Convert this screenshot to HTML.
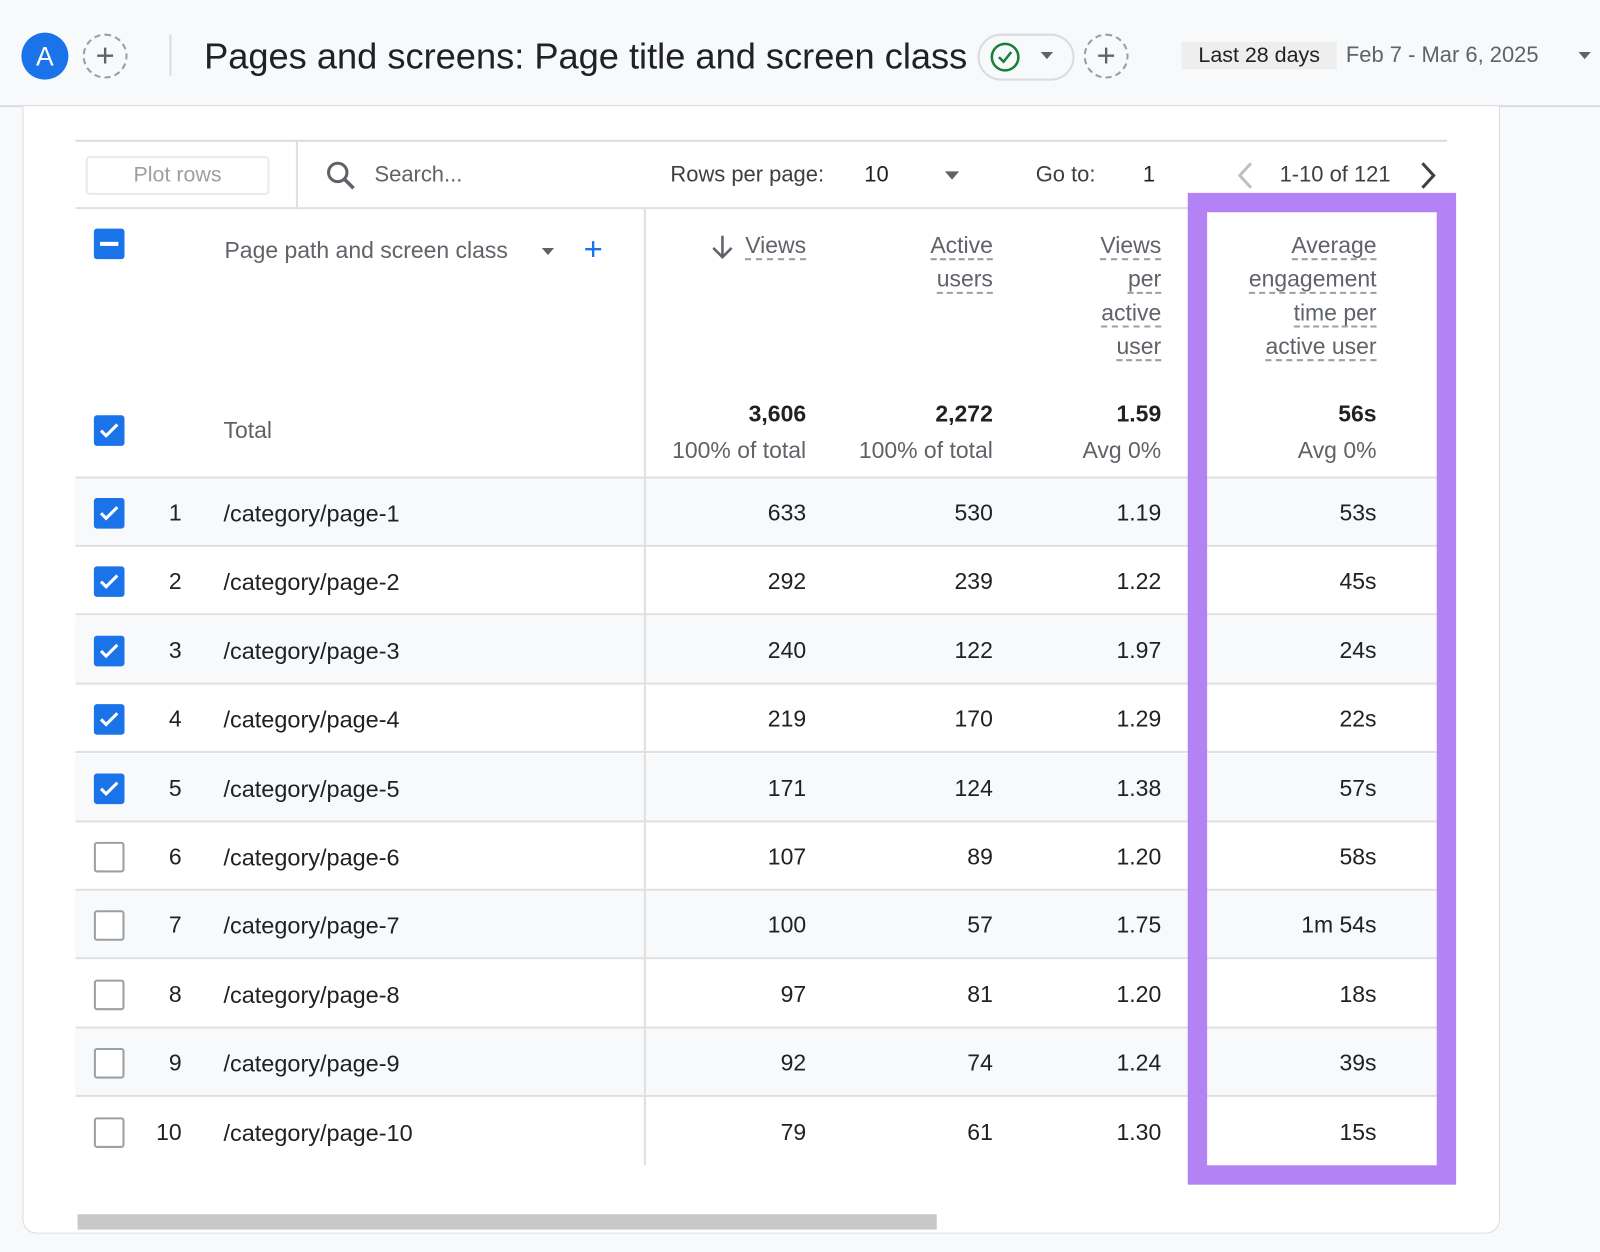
<!DOCTYPE html>
<html><head><meta charset="utf-8"><style>
*{margin:0;padding:0;box-sizing:border-box}
body{width:1600px;height:1252px;background:#f8f9fa;font-family:"Liberation Sans",Arial,sans-serif;position:relative;overflow:hidden;color:#202124}
#w{position:absolute;left:0;top:0;width:1568px;height:1227px;transform:scale(1.0204);transform-origin:0 0}
.a{position:absolute}
.hdr{left:0;top:0;width:1600px;height:105px;background:#f8f9fa;border-bottom:2px solid #dadce0}
.card{left:22px;top:104px;width:1448px;height:1105px;background:#fff;border:1px solid #dadce0;border-top:none;border-radius:0 0 14px 14px}
.cb{width:30px;height:30px;border-radius:3px;background:#1a73e8}
.ub{width:30px;height:30px;border-radius:3px;border:2.5px solid #9aa0a6;background:#fff}
.r{text-align:right;font-size:22.5px;line-height:26px}
.hl{text-align:right;font-size:22.5px;color:#5f6368;line-height:33px}
.hl span{border-bottom:2px dashed #9aa0a6}
.row{left:74px;width:1344px;height:67px;border-bottom:2px solid #e0e0e0}
</style></head><body><div id="w">
<div class="a hdr"></div>
<div class="a" style="left:21px;top:32px;width:46px;height:46px;border-radius:50%;background:#1a73e8;color:#fff;font-size:26px;text-align:center;line-height:46px">A</div>
<div class="a" style="left:81px;top:33px;width:44px;height:44px;border-radius:50%;border:2px dashed #9aa0a6;color:#5f6368;font-size:32px;text-align:center;line-height:38px">+</div>
<div class="a" style="left:166px;top:34px;width:2px;height:40px;background:#dadce0"></div>
<div class="a" style="left:200px;top:33px;font-size:35.5px;line-height:44px;color:#202124">Pages and screens: Page title and screen class</div>
<div class="a" style="left:958px;top:33px;width:95px;height:46px;border-radius:23px;border:2px solid #dadce0"></div>
<svg class="a" style="left:969px;top:40px" width="32" height="32" viewBox="0 0 32 32"><circle cx="16" cy="16" r="13" fill="none" stroke="#188038" stroke-width="2.5"/><path d="M10 16l4.5 4.5L22 11" fill="none" stroke="#188038" stroke-width="2.5"/></svg>
<div class="a" style="left:1020px;top:51px;border:6px solid transparent;border-top:7px solid #5f6368"></div>
<div class="a" style="left:1062px;top:33px;width:44px;height:44px;border-radius:50%;border:2px dashed #9aa0a6;color:#5f6368;font-size:32px;text-align:center;line-height:38px">+</div>
<div class="a" style="left:1158px;top:41px;width:152px;height:27px;background:#eeeeee;font-size:21px;line-height:27px;text-align:center;color:#202124">Last 28 days</div>
<div class="a" style="left:1319px;top:41px;font-size:21.5px;line-height:27px;color:#5f6368">Feb 7 - Mar 6, 2025</div>
<div class="a" style="left:1547px;top:51px;border:6px solid transparent;border-top:7px solid #5f6368"></div>

<div class="a card"></div>
<div class="a" style="left:74px;top:137px;width:1344px;height:2px;background:#dadce0"></div>
<div class="a" style="left:84px;top:153px;width:180px;height:38px;border:2px solid #e8eaed;border-radius:4px;color:#9aa0a6;font-size:21px;text-align:center;line-height:34px">Plot rows</div>
<div class="a" style="left:290px;top:139px;width:2px;height:66px;background:#e0e0e0"></div>
<svg class="a" style="left:318px;top:156px" width="32" height="32" viewBox="0 0 32 32"><circle cx="13" cy="13" r="9" fill="none" stroke="#5f6368" stroke-width="3"/><path d="M19.5 19.5l9 9" stroke="#5f6368" stroke-width="3.5"/></svg>
<div class="a" style="left:367px;top:159px;font-size:21.5px;color:#5f6368">Search...</div>
<div class="a" style="left:657px;top:159px;font-size:21.5px;color:#3c4043">Rows per page:</div>
<div class="a" style="left:847px;top:159px;font-size:21.5px;color:#202124">10</div>
<div class="a" style="left:926px;top:168px;border:7px solid transparent;border-top:8px solid #5f6368"></div>
<div class="a" style="left:1015px;top:159px;font-size:21.5px;color:#3c4043">Go to:</div>
<div class="a" style="left:1120px;top:159px;font-size:21.5px;color:#202124">1</div>
<svg class="a" style="left:1208px;top:156px" width="24" height="32"><path d="M18 4L7 16l11 12" fill="none" stroke="#bdc1c6" stroke-width="3"/></svg>
<div class="a" style="left:1254px;top:159px;font-size:21.5px;color:#3c4043">1-10 of 121</div>
<svg class="a" style="left:1388px;top:156px" width="24" height="32"><path d="M6 4l11 12L6 28" fill="none" stroke="#3c4043" stroke-width="3"/></svg>
<div class="a" style="left:74px;top:203px;width:1344px;height:2px;background:#e0e0e0"></div>

<div class="a cb" style="left:92px;top:224px"><div style="position:absolute;left:6px;top:13px;width:18px;height:4px;background:#fff"></div></div>
<div class="a" style="left:220px;top:233px;font-size:22.5px;color:#5f6368">Page path and screen class</div>
<div class="a" style="left:531px;top:243px;border:6px solid transparent;border-top:7px solid #5f6368"></div>
<div class="a" style="left:572px;top:226px;font-size:32px;color:#1a73e8;line-height:36px">+</div>
<svg class="a" style="left:696px;top:229px" width="24" height="26"><path d="M12 2v21M3 14l9 9 9-9" fill="none" stroke="#5f6368" stroke-width="2.5"/></svg>
<div class="a hl" style="left:640px;top:224px;width:150px"><span>Views</span></div>
<div class="a hl" style="left:820px;top:224px;width:153px"><span>Active</span><br><span>users</span></div>
<div class="a hl" style="left:1000px;top:224px;width:138px"><span>Views</span><br><span>per</span><br><span>active</span><br><span>user</span></div>
<div class="a hl" style="left:1190px;top:224px;width:159px"><span>Average</span><br><span>engagement</span><br><span>time per</span><br><span>active user</span></div>

<div class="a cb" style="left:92px;top:407px"></div>
<svg class="a" style="left:92px;top:407px" width="30" height="30"><path d="M7 15l5 5 11-11" fill="none" stroke="#fff" stroke-width="3"/></svg>
<div class="a" style="left:219px;top:409px;font-size:22.5px;color:#5f6368">Total</div>
<div class="a r" style="left:640px;top:393px;width:150px;font-weight:bold">3,606</div>
<div class="a r" style="left:640px;top:429px;width:150px;color:#5f6368">100% of total</div>
<div class="a r" style="left:820px;top:393px;width:153px;font-weight:bold">2,272</div>
<div class="a r" style="left:820px;top:429px;width:153px;color:#5f6368">100% of total</div>
<div class="a r" style="left:1000px;top:393px;width:138px;font-weight:bold">1.59</div>
<div class="a r" style="left:1000px;top:429px;width:138px;color:#5f6368">Avg 0%</div>
<div class="a r" style="left:1190px;top:393px;width:159px;font-weight:bold">56s</div>
<div class="a r" style="left:1190px;top:429px;width:159px;color:#5f6368">Avg 0%</div>
<div class="a" style="left:74px;top:467px;width:1344px;height:2px;background:#e0e0e0"></div>

<div id="rows"></div>
<div class="a" style="left:631px;top:204px;width:2px;height:938px;background:#e0e0e0"></div>

<div class="a" style="left:1164px;top:189px;width:263px;height:972px;border:19px solid #b383f5"></div>

<div class="a" style="left:76px;top:1190px;width:842px;height:15px;background:#c8c8c8"></div>

<script>
var d=[["633","530","1.19","53s"],["292","239","1.22","45s"],["240","122","1.97","24s"],["219","170","1.29","22s"],["171","124","1.38","57s"],["107","89","1.20","58s"],["100","57","1.75","1m 54s"],["97","81","1.20","18s"],["92","74","1.24","39s"],["79","61","1.30","15s"]];
var h="";
for(var i=0;i<10;i++){var t=469+i*67.4;var c=t+21;
h+='<div class="a row" style="top:'+t+'px;background:'+(i%2==0?'#f8f9fa':'#fff')+(i==9?';border-bottom:none':'')+'"></div>';
if(i<5){h+='<div class="a cb" style="left:92px;top:'+(t+19)+'px"></div><svg class="a" style="left:92px;top:'+(t+19)+'px" width="30" height="30"><path d="M7 15l5 5 11-11" fill="none" stroke="#fff" stroke-width="3"/></svg>';}
else h+='<div class="a ub" style="left:92px;top:'+(t+19)+'px"></div>';
h+='<div class="a r" style="left:140px;top:'+c+'px;width:38px">'+(i+1)+'</div>';
h+='<div class="a" style="left:219px;top:'+c+'px;font-size:23px;line-height:26px">/category/page-'+(i+1)+'</div>';
var L=[[640,150],[820,153],[1000,138],[1190,159]];
for(var j=0;j<4;j++)h+='<div class="a r" style="left:'+L[j][0]+'px;top:'+c+'px;width:'+L[j][1]+'px">'+d[i][j]+'</div>';
}
document.getElementById("rows").outerHTML=h;
</script>
</div></body></html>
